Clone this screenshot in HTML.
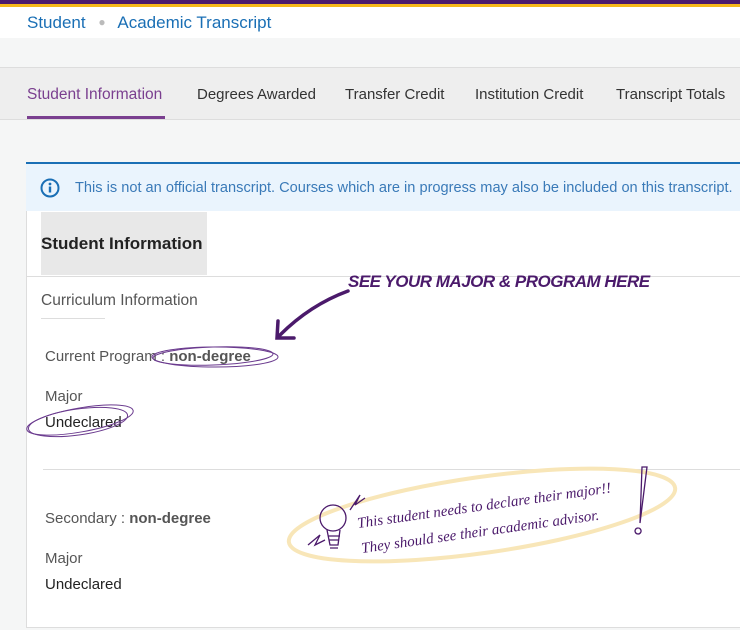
<!DOCTYPE html>
<html><head><style>
body{margin:0;width:740px;height:630px;overflow:hidden;background:#f5f6f6;font-family:"Liberation Sans",sans-serif;position:relative}
.a{position:absolute}
.t{font-size:14.6px;color:#333;white-space:nowrap}
</style></head><body>
<div class="a" style="top:0;left:0;width:740px;height:4px;background:#4b1a6b"></div>
<div class="a" style="top:4px;left:0;width:740px;height:3px;background:#f5b819"></div>
<div class="a" style="top:7px;left:0;width:740px;height:31px;background:#fff"></div>
<div class="a" style="top:13px;left:27px;font-size:17px;color:#1a6fb5;white-space:nowrap">Student <span style="color:#bbb;font-size:12px;margin:0 8px;position:relative;top:-2px">●</span> Academic Transcript</div>
<div class="a" style="top:67px;left:0;width:740px;height:51px;background:#eeeeee;border-top:1px solid #ddd;border-bottom:1px solid #ddd"></div>
<div class="a t" style="top:86px;left:27px;color:#7a3f8f;font-size:15.5px">Student Information</div>
<div class="a" style="top:116px;left:27px;width:138px;height:3px;background:#7a3f8f"></div>
<div class="a t" style="top:86px;left:197px;font-size:15px">Degrees Awarded</div>
<div class="a t" style="top:86px;left:345px;font-size:15px">Transfer Credit</div>
<div class="a t" style="top:86px;left:475px;font-size:15px">Institution Credit</div>
<div class="a t" style="top:86px;left:616px;font-size:15px">Transcript Totals</div>
<div class="a" style="top:162px;left:26px;width:714px;height:48px;background:#eaf4fd;border-top:2px solid #1a6fb5;border-bottom:1px solid #ddd"></div>
<svg class="a" style="top:178px;left:40px" width="20" height="20"><circle cx="10" cy="10" r="8.5" fill="none" stroke="#1a6fb5" stroke-width="2"/><circle cx="10" cy="6" r="1.4" fill="#1a6fb5"/><rect x="8.8" y="8.5" width="2.4" height="6" fill="#1a6fb5"/></svg>
<div class="a t" style="top:180px;left:75px;color:#3a7ab8;font-size:14.6px">This is not an official transcript. Courses which are in progress may also be included on this transcript.</div>
<div class="a" style="top:211px;left:26px;width:714px;height:416px;background:#fff;border-left:1px solid #ddd;border-bottom:1px solid #ddd"></div>
<div class="a" style="top:212px;left:41px;width:166px;height:63px;background:#e8e8e8"></div>
<div class="a" style="top:234px;left:41px;font-size:17px;font-weight:bold;color:#222">Student Information</div>
<div class="a" style="top:276px;left:27px;width:713px;height:1px;background:#ddd"></div>
<div class="a t" style="top:292px;left:41px;color:#555;font-size:15.5px">Curriculum Information</div>
<div class="a" style="top:318px;left:41px;width:64px;height:1px;background:#ddd"></div>
<div class="a t" style="top:348px;left:45px;color:#555;font-size:15px">Current Program : <b>non-degree</b></div>
<div class="a t" style="top:388px;left:45px;color:#555;font-size:15px">Major</div>
<div class="a t" style="top:414px;left:45px;color:#222;font-size:15px">Undeclared</div>
<div class="a" style="top:469px;left:43px;width:697px;height:1px;background:#ddd"></div>
<div class="a t" style="top:510px;left:45px;color:#555;font-size:15px">Secondary : <b>non-degree</b></div>
<div class="a t" style="top:550px;left:45px;color:#555;font-size:15px">Major</div>
<div class="a t" style="top:576px;left:45px;color:#222;font-size:15px">Undeclared</div>
<svg class="a" style="top:0;left:0" width="740" height="630">
<g fill="none" stroke="#6a3a8e" stroke-width="1">
<ellipse cx="215" cy="357" rx="63" ry="10"/><ellipse cx="213" cy="356" rx="60" ry="9" transform="rotate(-2 213 356)"/>
<ellipse cx="80" cy="420" rx="54" ry="12" transform="rotate(-10 80 420)"/><ellipse cx="78" cy="422" rx="50" ry="13" transform="rotate(-8 78 422)"/>
</g>
<path d="M348 291 Q310 305 280 335 M278 321 L277 338 L294 338" fill="none" stroke="#4b1a6b" stroke-width="3.5" stroke-linecap="round"/>
<text x="348" y="287" font-family="Liberation Sans" font-weight="bold" font-style="italic" font-size="17" fill="#4b1a6b" letter-spacing="-0.5">SEE YOUR MAJOR &amp; PROGRAM HERE</text>
<ellipse cx="482" cy="515" rx="195" ry="38" transform="rotate(-8 482 515)" fill="none" stroke="#f8e6b8" stroke-width="4"/>
<g fill="none" stroke="#4b1a6b" stroke-width="1.3">
<circle cx="333" cy="518" r="13"/><path d="M327 530 L330 545 L338 545 L340 530 M328 536 H340 M329 540 H339 M330 548 H338"/>
<path d="M642 467 L647 467 L640 523 Z M638 528 a3 3 0 1 0 0.1 0"/>
<path d="M350 510 L360 495 L355 505 L365 498 M308 545 L320 535 L315 545 L325 540"/>
</g>
<text x="358" y="528" font-family="Liberation Serif" font-style="italic" font-size="15" fill="#4b1a6b" transform="rotate(-8 358 528)">This student needs to declare their major!!</text>
<text x="362" y="553" font-family="Liberation Serif" font-style="italic" font-size="15" fill="#4b1a6b" transform="rotate(-8 362 553)">They should see their academic advisor.</text>
</svg>
</body></html>
